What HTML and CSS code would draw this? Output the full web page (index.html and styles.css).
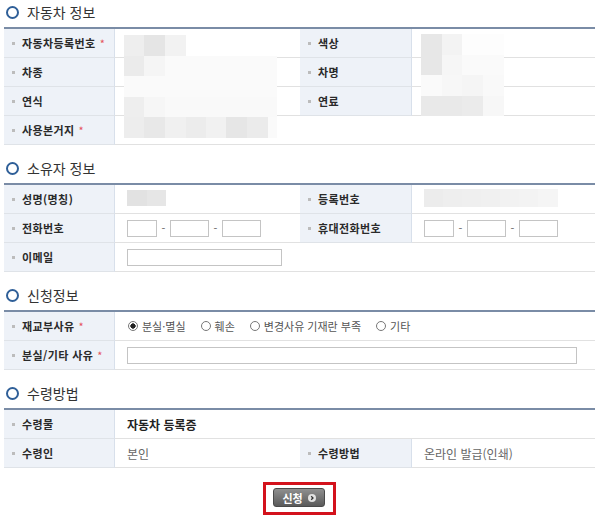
FILE: index.html
```html
<!DOCTYPE html>
<html lang="ko">
<head>
    <meta charset="UTF-8">
    <meta name="viewport" content="width=device-width, initial-scale=1.0">
    <title>자동차 등록증 재교부 신청</title>
    <link rel="stylesheet" href="styles.css">
</head>
<body>
    <div class="section">
        <h2 class="sec-title">자동차 정보</h2>
        <div class="info">
            <div class="th req">자동차등록번호</div>
            <div class="td"></div>
            <div class="th">색상</div>
            <div class="td"></div>

            <div class="th">차종</div>
            <div class="td"></div>
            <div class="th">차명</div>
            <div class="td"></div>

            <div class="th">연식</div>
            <div class="td"></div>
            <div class="th">연료</div>
            <div class="td"></div>

            <div class="th req">사용본거지</div>
            <div class="td wide"></div>

            <!-- blurred values -->
            <div class="mosaic mosaic-car">
                <div class="m-row r1"></div>
                <div class="m-row r2"></div>
                <div class="m-row r3"></div>
                <div class="m-row r4"></div>
                <div class="m-row r5"></div>
            </div>
            <div class="mosaic mosaic-color">
                <div class="m-row c1"></div>
                <div class="m-row c2"></div>
                <div class="m-row c3"></div>
                <div class="m-row c4"></div>
            </div>
        </div>
    </div>

    <div class="section">
        <h2 class="sec-title">소유자 정보</h2>
        <div class="info">
            <div class="th">성명(명칭)</div>
            <div class="td"><span class="blur blur-name"></span></div>
            <div class="th">등록번호</div>
            <div class="td"><span class="blur blur-reg"></span></div>

            <div class="th">전화번호</div>
            <div class="td">
                <div class="phone">
                    <input type="text" class="inp w30">
                    <span class="dash">-</span>
                    <input type="text" class="inp w39">
                    <span class="dash">-</span>
                    <input type="text" class="inp w39">
                </div>
            </div>
            <div class="th">휴대전화번호</div>
            <div class="td">
                <div class="phone">
                    <input type="text" class="inp w30">
                    <span class="dash">-</span>
                    <input type="text" class="inp w39">
                    <span class="dash">-</span>
                    <input type="text" class="inp w39">
                </div>
            </div>

            <div class="th">이메일</div>
            <div class="td wide"><input type="text" class="inp w155"></div>
        </div>
    </div>

    <div class="section">
        <h2 class="sec-title">신청정보</h2>
        <div class="info">
            <div class="th req">재교부사유</div>
            <div class="td wide">
                <div class="radios">
                    <label><input type="radio" name="reason" checked>분실·멸실</label>
                    <label><input type="radio" name="reason">훼손</label>
                    <label><input type="radio" name="reason">변경사유 기재란 부족</label>
                    <label><input type="radio" name="reason">기타</label>
                </div>
            </div>

            <div class="th req">분실/기타 사유</div>
            <div class="td wide"><input type="text" class="inp w450"></div>
        </div>
    </div>

    <div class="section">
        <h2 class="sec-title">수령방법</h2>
        <div class="info">
            <div class="th">수령물</div>
            <div class="td wide strong">자동차 등록증</div>

            <div class="th">수령인</div>
            <div class="td">본인</div>
            <div class="th">수령방법</div>
            <div class="td">온라인 발급(인쇄)</div>
        </div>
    </div>

    <div class="actions">
        <div class="btn-frame">
            <button type="button" class="btn">신청
                <svg class="arr" width="8" height="8" viewBox="0 0 8 8">
                    <circle cx="4" cy="4" r="4" fill="#e2e2e2"/>
                    <path d="M3.2 2.2 L5 4 L3.2 5.8" fill="none" stroke="#333" stroke-width="1.3"/>
                </svg>
            </button>
        </div>
    </div>
</body>
</html>
```

FILE: styles.css
```css
* {
    box-sizing: border-box;
}
body {
    margin: 0;
    padding: 2px 5px 0 4px;
    font-family: "Noto Sans CJK KR", "Noto Sans", sans-serif;
    color: #555;
    background-color: #fff;
}
.section + .section {
    margin-top: 13px;
}
.sec-title {
    display: flex;
    align-items: center;
    gap: 8px;
    height: 20px;
    margin: 0 0 5px;
    padding-left: 2px;
    font-size: 14px;
    font-weight: normal;
    line-height: 20px;
    color: #333;
}
.sec-title::before {
    content: "";
    width: 9px;
    height: 9px;
    border: 2.5px solid #2f5f98;
    border-radius: 50%;
}
.info {
    position: relative;
    display: grid;
    grid-template-columns: 111px 185px 112px 183px;
    border-top: 2px solid #7a8ca6;
}
.th {
    display: flex;
    align-items: center;
    height: 29px;
    padding-left: 8px;
    background-color: #eef2f8;
    border-right: 1px solid #d8e0eb;
    border-bottom: 1px solid #dfe3e8;
    font-size: 11px;
    font-weight: bold;
    letter-spacing: 0.4px;
    color: #2a2a2a;
    white-space: nowrap;
}
.th::before {
    content: "";
    width: 3px;
    height: 3px;
    margin-right: 7px;
    background-color: #bcbcbc;
}
.req::after {
    content: "*";
    margin-left: 4px;
    color: #e5535b;
    font-weight: normal;
}
.td {
    display: flex;
    align-items: center;
    height: 29px;
    padding-left: 12px;
    border-bottom: 1px solid #e1e1e1;
    font-size: 12px;
    color: #666;
    white-space: nowrap;
}
.wide {
    grid-column: span 3;
}
.strong {
    font-weight: bold;
    color: #222;
}

/* inputs */
.inp {
    height: 17px;
    margin: 0;
    padding: 0 3px;
    border: 1px solid #c4c4c4;
    background-color: #fff;
    font-size: 11px;
}
.w30 { width: 30px; }
.w39 { width: 39px; }
.w155 { width: 155px; }
.w450 { width: 450px; }
.phone {
    display: flex;
    align-items: center;
    gap: 4px;
}
.dash {
    width: 5px;
    text-align: center;
    font-size: 11px;
    color: #666;
}
.radios {
    display: flex;
    align-items: center;
    gap: 15px;
    padding-left: 1px;
    font-size: 11px;
    color: #555;
}
.radios label {
    display: flex;
    align-items: center;
    gap: 4px;
}
.radios input[type="radio"] {
    appearance: none;
    width: 10px;
    height: 10px;
    margin: 0;
    border: 1px solid #777;
    border-radius: 50%;
    background-color: #fff;
}
.radios input[type="radio"]:checked {
    background: radial-gradient(circle, #222 0 2.4px, #fff 2.9px);
}

/* blurred (masked) values */
.mosaic {
    position: absolute;
    display: flex;
    flex-direction: column;
}
.mosaic-car {
    left: 120px;
    top: 6px;
    width: 153px;
}
.mosaic-color {
    left: 417px;
    top: 5px;
    width: 83px;
}
.m-row {
    height: 20px;
}
.r1 { background: linear-gradient(to right, #eeeeee 0 20px, #e5e5e5 20px 41px, #f2f2f2 41px 62px, #fff 62px); height: 21px; }
.r2 { background: linear-gradient(to right, #ebebeb 0 20px, #f5f5f5 20px 41px, #fafafa 41px); }
.r3 { background: #fafafa; height: 21px; }
.r4 { background: linear-gradient(to right, #eeeeee 0 20px, #f6f6f6 20px 41px, #f9f9f9 41px); }
.r5 { background: linear-gradient(to right, #ededed 0 20px, #e8e8e8 20px 41px, #f0f0f0 41px 62px, #ececec 62px 82px, #f1f1f1 82px 102px, #e6e6e6 102px 123px, #ebebeb 123px 144px, #fafafa 144px); height: 21px; }
.c1 { background: linear-gradient(to right, #e7e7e7 0 21px, #f3f3f3 21px 41px, #fdfdfd 41px); height: 21px; }
.c2 { background: linear-gradient(to right, #e7e7e7 0 21px, #f6f6f6 21px 41px, #fafafa 41px); }
.c3 { background: linear-gradient(to right, #fafafa 0 21px, #f7f7f7 21px 41px, #f5f5f5 41px 62px, #f9f9f9 62px); height: 21px; }
.c4 { background: linear-gradient(to right, #e9e9e9 0 21px, #e9e9e9 21px 41px, #ebebeb 41px 62px, #f7f7f7 62px); }
.blur {
    display: block;
}
.blur-name {
    width: 39px;
    height: 16px;
    margin-top: -3px;
    background: linear-gradient(to right, #e2e2e2 0 20px, #e6e6e6 20px);
}
.blur-reg {
    width: 134px;
    height: 18px;
    margin-top: -2px;
    background: linear-gradient(to right, #ececec 0 19px, #eeeeee 19px 38px, #efefef 38px 57px, #f0f0f0 57px 76px, #f2f2f2 76px 95px, #f3f3f3 95px 114px, #f5f5f5 114px);
}

/* submit */
.actions {
    display: flex;
    justify-content: center;
    margin-top: 14px;
}
.btn-frame {
    padding: 3px 8px 5px 7px;
    border: 3px solid #d3121c;
}
.btn {
    display: flex;
    align-items: center;
    justify-content: center;
    gap: 5px;
    width: 52px;
    height: 19px;
    padding: 0;
    border: 1px solid #4a4a4a;
    border-radius: 3px;
    background: linear-gradient(#8f8f8f, #5a5a5a);
    font-family: inherit;
    font-size: 11px;
    font-weight: bold;
    color: #fff;
    cursor: pointer;
}
.arr {
    display: block;
}
```
